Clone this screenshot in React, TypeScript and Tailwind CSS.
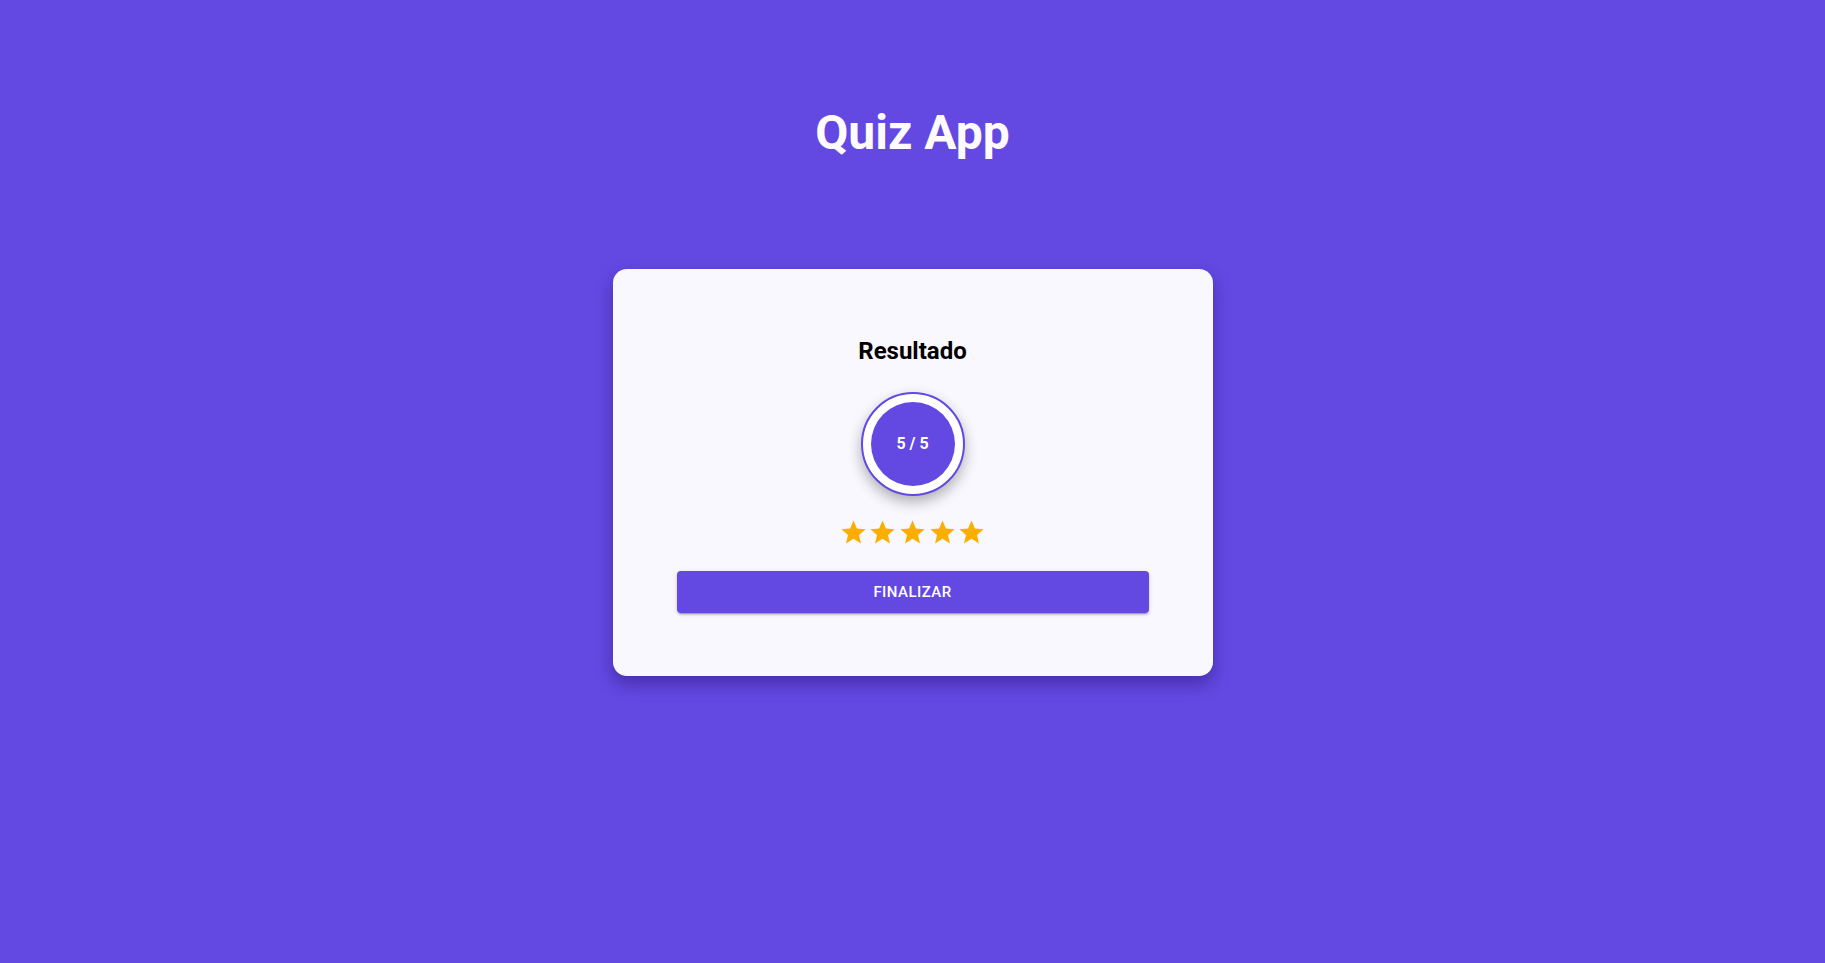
import React from "react";

const Star = () => (
  <svg viewBox="0 0 24 24" className="w-[29px] h-[29px] block" fill="#faaf00">
    <path d="M12 17.27 18.18 21l-1.64-7.03L22 9.24l-7.19-.61L12 2 9.19 8.63 2 9.24l5.46 4.73L5.82 21z" />
  </svg>
);

export default function App() {
  return (
    <div className="min-h-screen w-full bg-[#6348e2] flex flex-col items-center font-['Roboto',sans-serif]">
      <h1 className="mt-[109px] text-[48px] leading-[48px] font-bold text-[#fdfbff]">Quiz App</h1>
      <div className="mt-[112px] w-[600px] rounded-[14px] bg-[#f9f8fe] px-16 pt-[66px] pb-[63px] flex flex-col items-center shadow-[0_8px_16px_rgba(30,10,90,0.4)]">
        <h2 className="text-[24px] leading-[32px] font-bold text-black">Resultado</h2>
        <div className="mt-[25px] w-[104px] h-[104px] rounded-full border-2 border-[#6348e2] bg-white p-[8px] shadow-[0_6px_14px_rgba(0,0,0,0.3)]">
          <div className="w-full h-full rounded-full bg-[#6348e2] flex items-center justify-center">
            <span className="text-white text-[16px] font-bold">5 / 5</span>
          </div>
        </div>
        <div className="mt-[21.6px] flex gap-[0.6px]">
          <Star />
          <Star />
          <Star />
          <Star />
          <Star />
        </div>
        <button className="mt-[24.4px] w-full h-[42px] rounded-[4px] bg-[#6348e2] text-white text-[15px] font-medium tracking-[0.46px] uppercase shadow-[0_3px_1px_-2px_rgba(0,0,0,0.2),0_2px_2px_0_rgba(0,0,0,0.14),0_1px_5px_0_rgba(0,0,0,0.12)]">
          Finalizar
        </button>
      </div>
    </div>
  );
}
